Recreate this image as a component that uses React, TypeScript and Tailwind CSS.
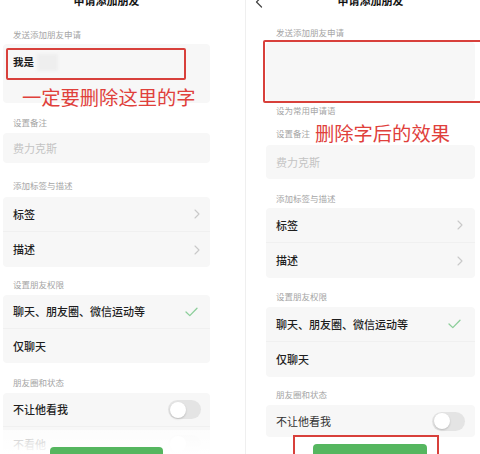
import React from "react";

const FONT = { fontFamily: '"Noto Sans CJK SC", "Noto Sans", sans-serif' };

function Chevron() {
  return (
    <svg width="6" height="10" viewBox="0 0 6 10" fill="none">
      <polyline points="1,1 5,5 1,9" stroke="#c9c9c9" strokeWidth="1.1" strokeLinecap="round" strokeLinejoin="round" />
    </svg>
  );
}

function Check() {
  return (
    <svg width="13" height="10" viewBox="0 0 13 10" fill="none">
      <polyline points="1,5 4.8,8.6 12,1.2" stroke="#8cce9a" strokeWidth="1.3" strokeLinecap="round" strokeLinejoin="round" />
    </svg>
  );
}

function Toggle({ faint = false }: { faint?: boolean }) {
  return (
    <div className={`w-[33px] h-[19px] rounded-full p-[1.5px] flex items-center ${faint ? "bg-[#f0f0f0]" : "bg-[#e4e4e4]"}`}>
      <div className={`w-[16px] h-[16px] rounded-full bg-white ${faint ? "" : "shadow-[0_1px_2px_rgba(0,0,0,0.18)]"}`} />
    </div>
  );
}

const labelCls = "shrink-0 pl-[10px] text-[8.5px] leading-[12px] h-[12px] text-[#a5a5a5] whitespace-nowrap";
const cardCls = "shrink-0 bg-[#f7f7f7] rounded-[4px] flex flex-col";
const rowCls = "shrink-0 flex items-center justify-between px-[10px] text-[11px] text-[#1e1e1e] font-medium";

function Title() {
  return (
    <div className="shrink-0 relative h-[12px] -mt-[6px] text-center text-[11px] leading-[12px] font-semibold text-[#111]">
      申请添加朋友
    </div>
  );
}

export default function App() {
  return (
    <div className="w-[480px] h-[454px] overflow-hidden bg-white flex" style={FONT}>
      {/* LEFT PANEL */}
      <div className="relative w-[245px] h-full overflow-hidden pl-[3px] pr-[35px] flex flex-col">
        <Title />
        <div className={`${labelCls} mt-[22px]`}>发送添加朋友申请</div>
        <div className={`${cardCls} mt-[4px] h-[59px] relative`}>
          <div className="flex items-center px-[10px] mt-[12px] h-[12px]">
            <span className="text-[10.5px] font-semibold text-[#1a1a1a]">我是</span>
            <div className="ml-[3px] w-[21px] h-[17px] bg-[#eeeeee] blur-[1.5px]" />
          </div>
          <div className="absolute left-[3px] top-[4px] w-[180px] h-[32px] border-2 border-[#d8403b] rounded-[2px]" />
          <div className="absolute left-[19px] top-[42px] text-[19.3px] leading-[22px] text-[#e0403b] whitespace-nowrap">
            一定要删除这里的字
          </div>
        </div>
        <div className={`${labelCls} mt-[13px]`}>设置备注</div>
        <div className={`${cardCls} mt-[5px] h-[30px] justify-center px-[10px]`}>
          <span className="text-[11px] text-[#c4c4c4]">费力克斯</span>
        </div>
        <div className={`${labelCls} mt-[16px]`}>添加标签与描述</div>
        <div className={`${cardCls} mt-[6px]`}>
          <div className={`${rowCls} h-[35px] border-b border-[#f0f0f0]`}>
            <span>标签</span>
            <Chevron />
          </div>
          <div className={`${rowCls} h-[35px]`}>
            <span>描述</span>
            <Chevron />
          </div>
        </div>
        <div className={`${labelCls} mt-[11px]`}>设置朋友权限</div>
        <div className={`${cardCls} mt-[5px]`}>
          <div className={`${rowCls} h-[34px] border-b border-[#f0f0f0] pr-[12px]`}>
            <span>聊天、朋友圈、微信运动等</span>
            <Check />
          </div>
          <div className={`${rowCls} h-[34px]`}>
            <span>仅聊天</span>
          </div>
        </div>
        <div className={`${labelCls} mt-[13px]`}>朋友圈和状态</div>
        <div className={`${cardCls} mt-[5px]`}>
          <div className={`${rowCls} h-[34px] border-b border-[#f0f0f0] pr-[9px]`}>
            <span>不让他看我</span>
            <Toggle />
          </div>
          <div className={`${rowCls} h-[34px] pr-[9px]`}>
            <span>不看他</span>
            <Toggle faint />
          </div>
        </div>
        {/* bottom fade + button */}
        <div className="absolute left-0 right-0 bottom-0 h-[24px] bg-gradient-to-b from-white/70 to-white" />
        <div className="absolute left-[50px] top-[447px] w-[113px] h-[20px] rounded-[4px] bg-[#55b65f]" />
      </div>

      {/* RIGHT PANEL */}
      <div className="relative flex-1 h-full overflow-hidden border-l border-[#efefef] pl-[20px] pr-[5px] flex flex-col">
        <svg className="absolute left-[9px] -top-[4px]" width="8" height="12" viewBox="0 0 8 12" fill="none">
          <polyline points="6.5,1 1.5,6 6.5,11" stroke="#444" strokeWidth="1.2" strokeLinecap="round" strokeLinejoin="round" />
        </svg>
        <Title />
        <div className={`${labelCls} mt-[20px]`}>发送添加朋友申请</div>
        <div className={`${cardCls} mt-[4px] h-[59px] relative`}>
          <div className="absolute -left-[3px] -top-[2px] -right-[12px] -bottom-[2px] border-2 border-[#d8403b] rounded-[2px]" />
        </div>
        <div className={`${labelCls} mt-[3px]`}>设为常用申请语</div>
        <div className={`${labelCls} mt-[11px] relative`}>
          设置备注
          <span className="absolute left-[49px] -top-[5px] text-[19.3px] leading-[22px] text-[#e0403b] whitespace-nowrap">
            删除字后的效果
          </span>
        </div>
        <div className={`${cardCls} mt-[6px] h-[34px] justify-center px-[10px]`}>
          <span className="text-[11px] text-[#c4c4c4]">费力克斯</span>
        </div>
        <div className={`${labelCls} mt-[13px]`}>添加标签与描述</div>
        <div className={`${cardCls} mt-[4px]`}>
          <div className={`${rowCls} h-[35px] border-b border-[#f0f0f0] pr-[12px]`}>
            <span>标签</span>
            <Chevron />
          </div>
          <div className={`${rowCls} h-[35px] pr-[12px]`}>
            <span>描述</span>
            <Chevron />
          </div>
        </div>
        <div className={`${labelCls} mt-[12px]`}>设置朋友权限</div>
        <div className={`${cardCls} mt-[5px]`}>
          <div className={`${rowCls} h-[35px] border-b border-[#f0f0f0] pr-[14px]`}>
            <span>聊天、朋友圈、微信运动等</span>
            <Check />
          </div>
          <div className={`${rowCls} h-[35px]`}>
            <span>仅聊天</span>
          </div>
        </div>
        <div className={`${labelCls} mt-[11px]`}>朋友圈和状态</div>
        <div className={`${cardCls} mt-[5px]`}>
          <div className={`${rowCls} h-[32px] pr-[10px] font-normal text-[#333]`}>
            <span>不让他看我</span>
            <Toggle />
          </div>
        </div>
        <div className="absolute left-[47px] top-[435px] w-[146px] h-[30px] border-2 border-[#d8403b]" />
        <div className="absolute left-[67px] top-[444px] w-[114px] h-[20px] rounded-[4px] bg-[#55b65f]" />
      </div>
    </div>
  );
}
